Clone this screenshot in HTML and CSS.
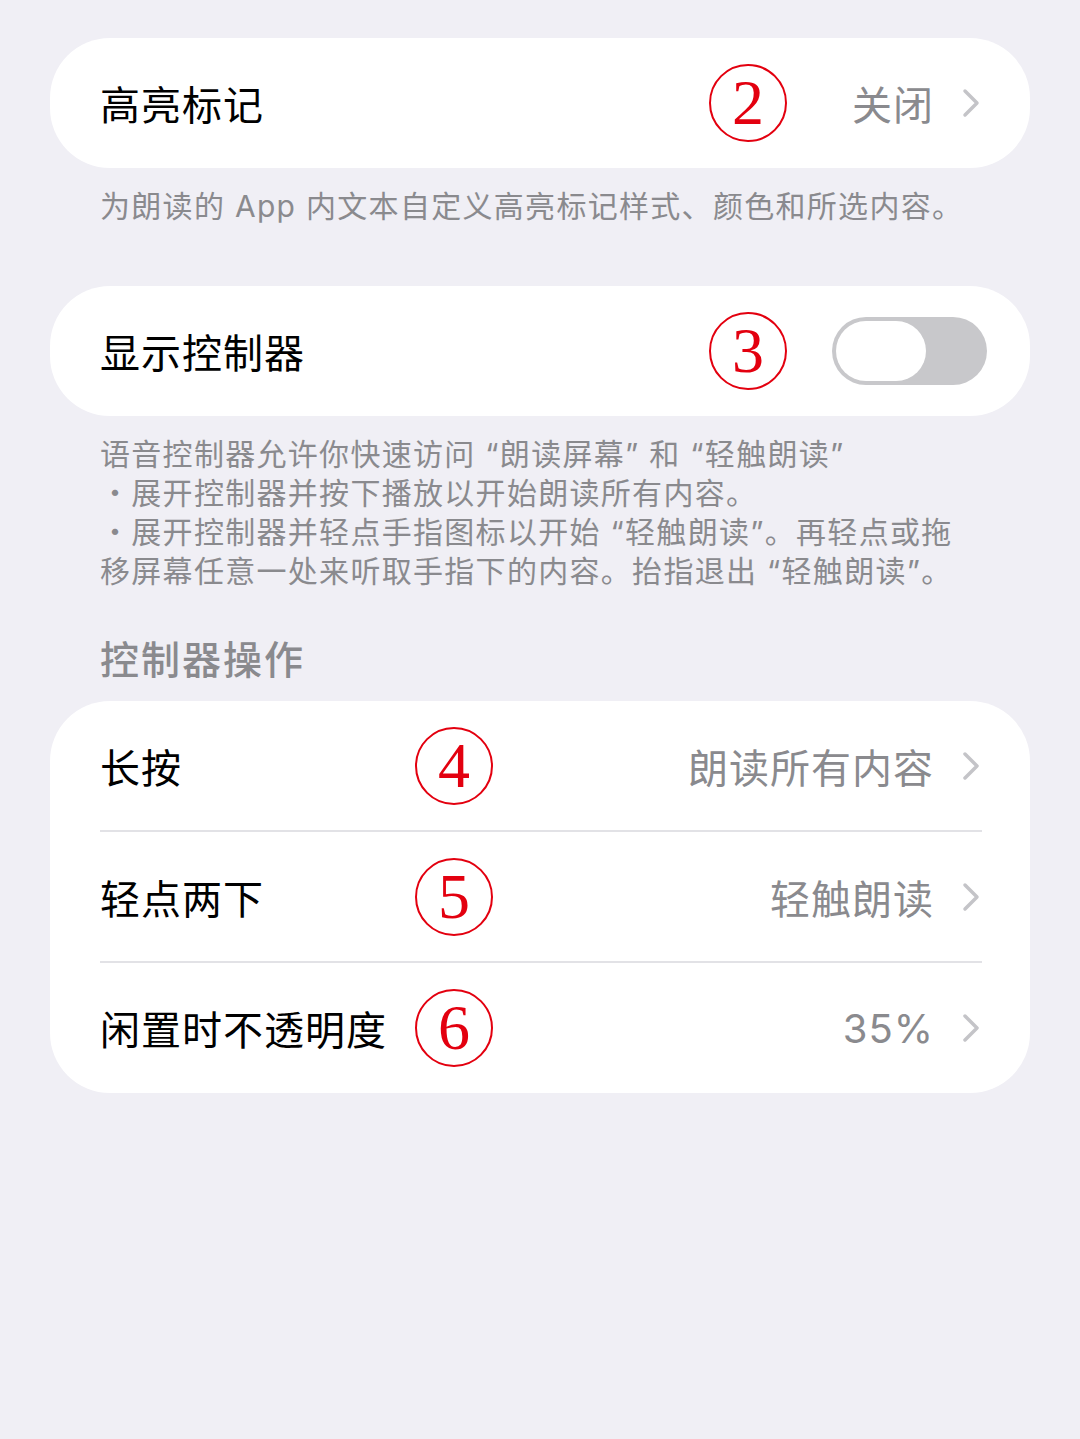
FILE: index.html
```html
<!DOCTYPE html>
<html lang="zh-CN">
<head>
    <meta charset="UTF-8">
    <meta name="viewport" content="width=device-width, initial-scale=1.0">
    <title>朗读内容</title>
    <link rel="stylesheet" href="styles.css">
</head>
<body>
    <div class="page">
        <div class="card">
            <div class="row">
                <span class="label">高亮标记</span>
                <span class="mark mark-far">2</span>
                <span class="value">关闭</span>
                <svg class="chevron" viewBox="0 0 18 30"><polyline points="3,3 15,15 3,27"/></svg>
            </div>
        </div>
        <p class="footnote">为朗读的 App 内文本自定义高亮标记样式、颜色和所选内容。</p>

        <div class="card card-gap">
            <div class="row">
                <span class="label">显示控制器</span>
                <span class="mark mark-far">3</span>
                <div class="toggle"><div class="knob"></div></div>
            </div>
        </div>
        <p class="footnote">语音控制器允许你快速访问 “朗读屏幕” 和 “轻触朗读”<br>・展开控制器并按下播放以开始朗读所有内容。<br>・展开控制器并轻点手指图标以开始 “轻触朗读”。再轻点或拖<br>移屏幕任意一处来听取手指下的内容。抬指退出 “轻触朗读”。</p>

        <h2 class="section-title">控制器操作</h2>
        <div class="card">
            <div class="row divided">
                <span class="label">长按</span>
                <span class="mark mark-near">4</span>
                <span class="value">朗读所有内容</span>
                <svg class="chevron" viewBox="0 0 18 30"><polyline points="3,3 15,15 3,27"/></svg>
            </div>
            <div class="row divided">
                <span class="label">轻点两下</span>
                <span class="mark mark-near">5</span>
                <span class="value">轻触朗读</span>
                <svg class="chevron" viewBox="0 0 18 30"><polyline points="3,3 15,15 3,27"/></svg>
            </div>
            <div class="row">
                <span class="label">闲置时不透明度</span>
                <span class="mark mark-near">6</span>
                <span class="value">35%</span>
                <svg class="chevron" viewBox="0 0 18 30"><polyline points="3,3 15,15 3,27"/></svg>
            </div>
        </div>
    </div>
</body>
</html>
```

FILE: styles.css
```css
body {
    margin: 0;
    background: #f0eff5;
    font-family: "Inter", "Noto Sans CJK SC", sans-serif;
    color: #000;
}

.page {
    padding: 38px 50px 0;
}

.card {
    background: #fff;
    border-radius: 60px;
    overflow: hidden;
}

.card-gap {
    margin-top: 60px;
}

.row {
    position: relative;
    display: flex;
    align-items: center;
    height: 130px;
    margin: 0 48px 0 50px;
}

.row.divided {
    border-bottom: 2px solid #e2e2e6;
    height: 129px;
}

.label {
    font-size: 40px;
    letter-spacing: 1px;
    flex: 1;
}

.value {
    font-size: 40px;
    letter-spacing: 1px;
    color: #8a8a8e;
    margin-right: 28px;
}

.chevron {
    width: 18px;
    height: 30px;
    fill: none;
    stroke: #c4c4c8;
    stroke-width: 3.5;
    stroke-linecap: round;
    stroke-linejoin: round;
    margin-right: 2px;
}

/* red annotation circles drawn over the screenshot */
.mark {
    position: absolute;
    top: 26px;
    width: 74px;
    height: 74px;
    border: 2px solid #e3000f;
    border-radius: 50%;
    color: #e3000f;
    font-family: "Liberation Serif", serif;
    font-size: 64px;
    line-height: 74px;
    text-align: center;
}

.mark-far {
    left: 609px;
}

.mark-near {
    left: 315px;
}

.toggle {
    display: flex;
    width: 155px;
    height: 68px;
    padding: 4px;
    box-sizing: border-box;
    border-radius: 34px;
    background: #c8c8cb;
    margin-right: -5px;
}

.knob {
    width: 90px;
    height: 60px;
    border-radius: 30px;
    background: #fff;
}

.footnote {
    margin: 19px 0 0 50px;
    font-size: 30px;
    line-height: 39px;
    letter-spacing: 1.3px;
    color: #8a8a8e;
}

.section-title {
    margin: 44px 0 16px 50px;
    font-size: 39px;
    line-height: 50px;
    letter-spacing: 2px;
    font-weight: 500;
    color: #8a8a8e;
}
```
